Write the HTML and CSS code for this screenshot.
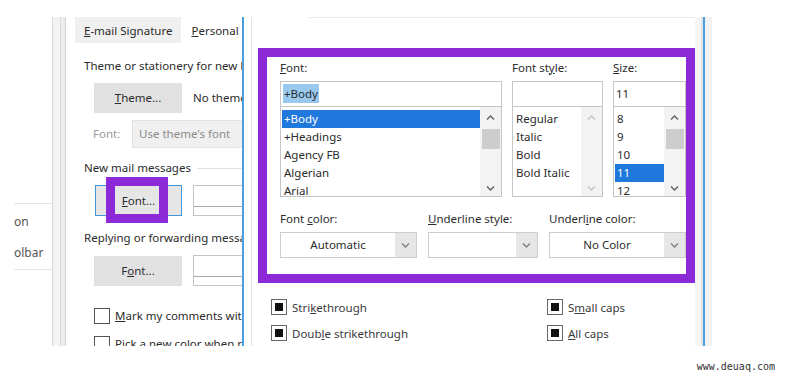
FILE: index.html
```html
<!DOCTYPE html>
<html lang="en">
<head>
    <meta charset="UTF-8">
    <meta name="viewport" content="width=device-width, initial-scale=1.0">
    <title>Font dialog</title>
    <link rel="stylesheet" href="styles.css">
</head>
<body>
    <div class="shot">
        <!-- options sidebar, cut off on the left -->
        <div class="side">
            <div class="side-panel">
                <div class="side-item">on</div>
                <div class="side-item">olbar</div>
            </div>
        </div>

        <!-- signatures and stationery dialog -->
        <div class="options">
            <div class="opt-frame"></div>
            <div class="opt-body">
                <div class="tabs">
                    <div class="tab"><u>E</u>-mail Signature</div>
                    <div class="tab tab-active"><u>P</u>ersonal Stationery</div>
                </div>
                <div class="opt-content">
                    <div class="opt-text">Theme or stationery for new HTML e-mail messages</div>
                    <div class="opt-row theme-row">
                        <button class="btn"><u>T</u>heme...</button>
                        <span>No theme currently selected</span>
                    </div>
                    <div class="opt-row font-row">
                        <span class="muted">Font:</span>
                        <div class="fake-select">Use theme's font</div>
                    </div>
                    <div class="group-title">New mail messages</div>
                    <div class="opt-row btn-row">
                        <div class="btn-focus">
                            <u>F</u>ont...
                            <div class="mark"></div>
                        </div>
                        <div class="preview"></div>
                    </div>
                    <div class="opt-text reply-title">Replying or forwarding messages</div>
                    <div class="opt-row btn-row2">
                        <button class="btn">F<u>o</u>nt...</button>
                        <div class="preview"></div>
                    </div>
                    <div class="opt-row check-row">
                        <span class="cb"></span>
                        <span><u>M</u>ark my comments with:</span>
                    </div>
                    <div class="opt-row check-row check-row2">
                        <span class="cb"></span>
                        <span>Pick a new color when replying or forwarding</span>
                    </div>
                </div>
            </div>
        </div>

        <!-- font dialog -->
        <div class="fontdlg">
            <div class="fd-main">
                <div class="fd-inner">
                    <div class="fd-top"></div>
                    <div class="hl">
                        <div class="fd-cols">
                            <div class="col col-font">
                                <div class="lbl"><u>F</u>ont:</div>
                                <div class="input"><span class="sel-text">+Body</span></div>
                                <div class="list">
                                    <div class="items">
                                        <div class="item selected">+Body</div>
                                        <div class="item">+Headings</div>
                                        <div class="item">Agency FB</div>
                                        <div class="item">Algerian</div>
                                        <div class="item">Arial</div>
                                    </div>
                                    <div class="sbar">
                                        <svg class="chev" viewBox="0 0 9 5"><polyline points="1,4.5 4.5,1 8,4.5"/></svg>
                                        <div class="thumb"></div>
                                        <svg class="chev down" viewBox="0 0 9 5"><polyline points="1,0.5 4.5,4 8,0.5"/></svg>
                                    </div>
                                </div>
                            </div>
                            <div class="col col-style">
                                <div class="lbl">Font st<u>y</u>le:</div>
                                <div class="input"></div>
                                <div class="list">
                                    <div class="items">
                                        <div class="item">Regular</div>
                                        <div class="item">Italic</div>
                                        <div class="item">Bold</div>
                                        <div class="item">Bold Italic</div>
                                    </div>
                                    <div class="sbar off">
                                        <svg class="chev" viewBox="0 0 9 5"><polyline points="1,4.5 4.5,1 8,4.5"/></svg>
                                        <svg class="chev down" viewBox="0 0 9 5"><polyline points="1,0.5 4.5,4 8,0.5"/></svg>
                                    </div>
                                </div>
                            </div>
                            <div class="col col-size">
                                <div class="lbl"><u>S</u>ize:</div>
                                <div class="input">11</div>
                                <div class="list">
                                    <div class="items">
                                        <div class="item">8</div>
                                        <div class="item">9</div>
                                        <div class="item">10</div>
                                        <div class="item selected">11</div>
                                        <div class="item">12</div>
                                    </div>
                                    <div class="sbar">
                                        <svg class="chev" viewBox="0 0 9 5"><polyline points="1,4.5 4.5,1 8,4.5"/></svg>
                                        <div class="thumb"></div>
                                        <svg class="chev down" viewBox="0 0 9 5"><polyline points="1,0.5 4.5,4 8,0.5"/></svg>
                                    </div>
                                </div>
                            </div>
                        </div>

                        <div class="fd-cols fd-cols2">
                            <div class="col col-wide">
                                <div class="lbl">Font <u>c</u>olor:</div>
                                <div class="dd">
                                    <div class="dd-text">Automatic</div>
                                    <div class="dd-btn"><svg class="chev" viewBox="0 0 9 5"><polyline points="1,0.5 4.5,4 8,0.5"/></svg></div>
                                </div>
                            </div>
                            <div class="col col-mid">
                                <div class="lbl"><u>U</u>nderline style:</div>
                                <div class="dd">
                                    <div class="dd-text"></div>
                                    <div class="dd-btn"><svg class="chev" viewBox="0 0 9 5"><polyline points="1,0.5 4.5,4 8,0.5"/></svg></div>
                                </div>
                            </div>
                            <div class="col col-wide">
                                <div class="lbl">Underl<u>i</u>ne color:</div>
                                <div class="dd">
                                    <div class="dd-text">No Color</div>
                                    <div class="dd-btn"><svg class="chev" viewBox="0 0 9 5"><polyline points="1,0.5 4.5,4 8,0.5"/></svg></div>
                                </div>
                            </div>
                        </div>
                    </div>

                    <div class="fx">
                        <div class="fx-col">
                            <div class="fx-row"><span class="box"><span></span></span><span>Stri<u>k</u>ethrough</span></div>
                            <div class="fx-row"><span class="box"><span></span></span><span>Doub<u>l</u>e strikethrough</span></div>
                        </div>
                        <div class="fx-col">
                            <div class="fx-row"><span class="box"><span></span></span><span>S<u>m</u>all caps</span></div>
                            <div class="fx-row"><span class="box"><span></span></span><span><u>A</u>ll caps</span></div>
                        </div>
                    </div>
                </div>
            </div>
            <div class="fd-edge"></div>
        </div>
    </div>

    <div class="wm">www.deuaq.com</div>
</body>
</html>
```

FILE: styles.css
```css
/* page */
body {
    margin: 0;
    background: #fff;
    font-family: "Noto Sans", "Open Sans", sans-serif;
    font-size: 11.5px;
    color: #2b2b2b;
}

u {
    text-decoration-thickness: 1px;
    text-underline-offset: 1px;
}

.shot {
    display: flex;
    margin-top: 17px;
    height: 329px;
}

/* left sidebar */
.side {
    width: 52px;
    flex: none;
}

.side-panel {
    margin-top: 186px;
    margin-left: 14px;
    border-top: 1px solid #e6e6e6;
    border-bottom: 1px solid #e6e6e6;
    padding: 10px 0 8px;
    line-height: 16px;
    font-size: 12px;
    color: #555;
}

.side-item + .side-item {
    margin-top: 15px;
}

/* options dialog */
.options {
    width: 190px;
    flex: none;
    display: flex;
}

.opt-frame {
    width: 14px;
    background: linear-gradient(to right, #d9d9d9 0 1px, #f3f3f3 1px 8px, #dadada 8px 9px, #ededed 9px 13px, #d2d2d2 13px 14px);
}

.opt-body {
    width: 176px;
    overflow: hidden;
}

.tabs {
    display: flex;
    height: 26px;
    padding-left: 9px;
    white-space: nowrap;
}

.tab {
    flex: none;
    line-height: 28px;
    padding: 0 9px;
    background: #f0f0f0;
}

.tab-active {
    background: #fff;
    padding-left: 10px;
}

.opt-content {
    padding: 15px 0 0 18px;
    white-space: nowrap;
    line-height: 16px;
}

.opt-row {
    display: flex;
    align-items: center;
}

.opt-row > * {
    flex: none;
}

.btn {
    width: 88px;
    height: 30px;
    padding: 0;
    background: #e1e1e1;
    border: 1px solid #e1e1e1;
    font: inherit;
    color: #2b2b2b;
}

.theme-row {
    margin-top: 9px;
    padding-left: 10px;
    gap: 11px;
}

.font-row {
    margin-top: 7px;
    padding-left: 9px;
}

.muted {
    width: 39px;
    color: #9a9a9a;
}

.fake-select {
    width: 140px;
    height: 28px;
    box-sizing: border-box;
    padding-left: 6px;
    line-height: 26px;
    background: #f0f0f0;
    border: 1px solid #e2e2e2;
    color: #8a8a8a;
}

.group-title {
    margin-top: 12px;
    display: flex;
    align-items: center;
}

.group-title::after {
    content: "";
    flex: 1;
    margin-left: 6px;
    border-top: 1px solid #e2e2e2;
}

.btn-row {
    margin-top: 9px;
    padding-left: 11px;
    gap: 11px;
}

.btn-focus {
    position: relative;
    width: 87px;
    height: 31px;
    box-sizing: border-box;
    border: 1px solid #3f96dc;
    background: #e6e6e6;
    text-align: center;
    line-height: 29px;
}

/* purple highlight drawn over the button */
.mark {
    position: absolute;
    left: 10px;
    top: -9px;
    width: 62px;
    height: 46px;
    box-sizing: border-box;
    border: 9px solid #8b2ad6;
}

.preview {
    width: 60px;
    height: 31px;
    box-sizing: border-box;
    border: 1px solid #c4c4c4;
    background: linear-gradient(#fff 0 20px, #a8a8a8 20px 21px, #fff 21px);
}

.reply-title {
    margin-top: 14px;
}

.btn-row2 {
    margin-top: 9px;
    padding-left: 10px;
    gap: 11px;
}

.check-row {
    margin-top: 22px;
    padding-left: 10px;
    gap: 5px;
}

.check-row2 {
    margin-top: 12px;
}

.cb {
    width: 16px;
    height: 16px;
    box-sizing: border-box;
    border: 1px solid #555;
    background: #fff;
}

/* font dialog */
.fontdlg {
    display: flex;
    flex: none;
}

.fd-main {
    width: 453px;
    box-sizing: border-box;
    border-left: 2px solid #4a9fe0;
}

.fd-inner {
    height: 100%;
    margin-left: 7px;
    border-left: 1px solid #e2e2e2;
}

.fd-top {
    height: 31px;
}

.fd-top::before {
    content: "";
    display: block;
    margin-left: 56px;
    border-top: 1px solid #e8e8e8;
}

.hl {
    margin-left: 6px;
    border: 9px solid #8b2ad6;
    background: #fff;
    padding: 3px 0 16px 13px;
}

.fd-cols {
    display: flex;
    gap: 10px;
}

.fd-cols2 {
    gap: 11px;
    margin-top: 14px;
}

.col {
    flex: none;
}

.col-font { width: 222px; }
.col-style { width: 91px; }
.col-size { width: 73px; }
.col-wide { width: 137px; }
.col-mid { width: 110px; }

.lbl {
    line-height: 16px;
    margin-bottom: 5px;
    white-space: nowrap;
}

.input {
    height: 26px;
    box-sizing: border-box;
    border: 1px solid #c6c6c6;
    padding-left: 2px;
    line-height: 24px;
}

.sel-text {
    background: #99c9ef;
    padding: 2px 1px;
}

.list {
    display: flex;
    height: 90px;
    box-sizing: border-box;
    border: 1px solid #c6c6c6;
    border-top: none;
    overflow: hidden;
}

.items {
    flex: 1;
    padding-top: 3px;
    line-height: 18px;
    white-space: nowrap;
}

.item {
    padding-left: 3px;
}

.item.selected {
    margin-left: 1px;
    padding-left: 2px;
    background: #1f78dc;
    color: #fff;
}

.sbar {
    width: 21px;
    flex: none;
    display: flex;
    flex-direction: column;
    align-items: center;
    padding: 8px 0 5px;
    box-sizing: border-box;
    background: #f3f3f3;
}

.chev {
    width: 9px;
    height: 5px;
    fill: none;
    stroke: #606060;
    stroke-width: 1.4;
}

.sbar.off .chev {
    stroke: #c4c4c4;
}

.thumb {
    width: 18px;
    height: 20px;
    margin-top: 9px;
    background: #cdcdcd;
}

.chev.down {
    margin-top: auto;
}

.dd {
    display: flex;
    height: 26px;
    box-sizing: border-box;
    border: 1px solid #cccccc;
}

.dd-text {
    flex: 1;
    text-align: center;
    line-height: 24px;
}

.dd-btn {
    width: 21px;
    display: flex;
    align-items: center;
    justify-content: center;
    background: #e6e6e6;
}

.dd-btn .chev {
    stroke: #808080;
}

/* effects checkboxes */
.fx {
    display: flex;
    margin-top: 11px;
    padding-left: 19px;
}

.fx-col:first-child {
    width: 276px;
}

.fx-row {
    display: flex;
    align-items: center;
    gap: 5px;
    height: 26px;
    color: #3a3a3a;
}

.box {
    width: 16px;
    height: 16px;
    box-sizing: border-box;
    border: 1px solid #666;
    display: flex;
    align-items: center;
    justify-content: center;
    background: #fff;
}

.box span {
    width: 8px;
    height: 8px;
    background: #111;
}

.fd-edge {
    width: 17px;
    flex: none;
    background: linear-gradient(to right, #f5f5f5 0 6px, #e2e2e2 6px 8px, #4a9fe0 8px 10px, #f2f2f2 10px 17px);
}

/* watermark */
.wm {
    margin-top: 14px;
    padding-right: 17px;
    text-align: right;
    font: 10px/14px "DejaVu Sans Mono", monospace;
    color: #333;
}
```
